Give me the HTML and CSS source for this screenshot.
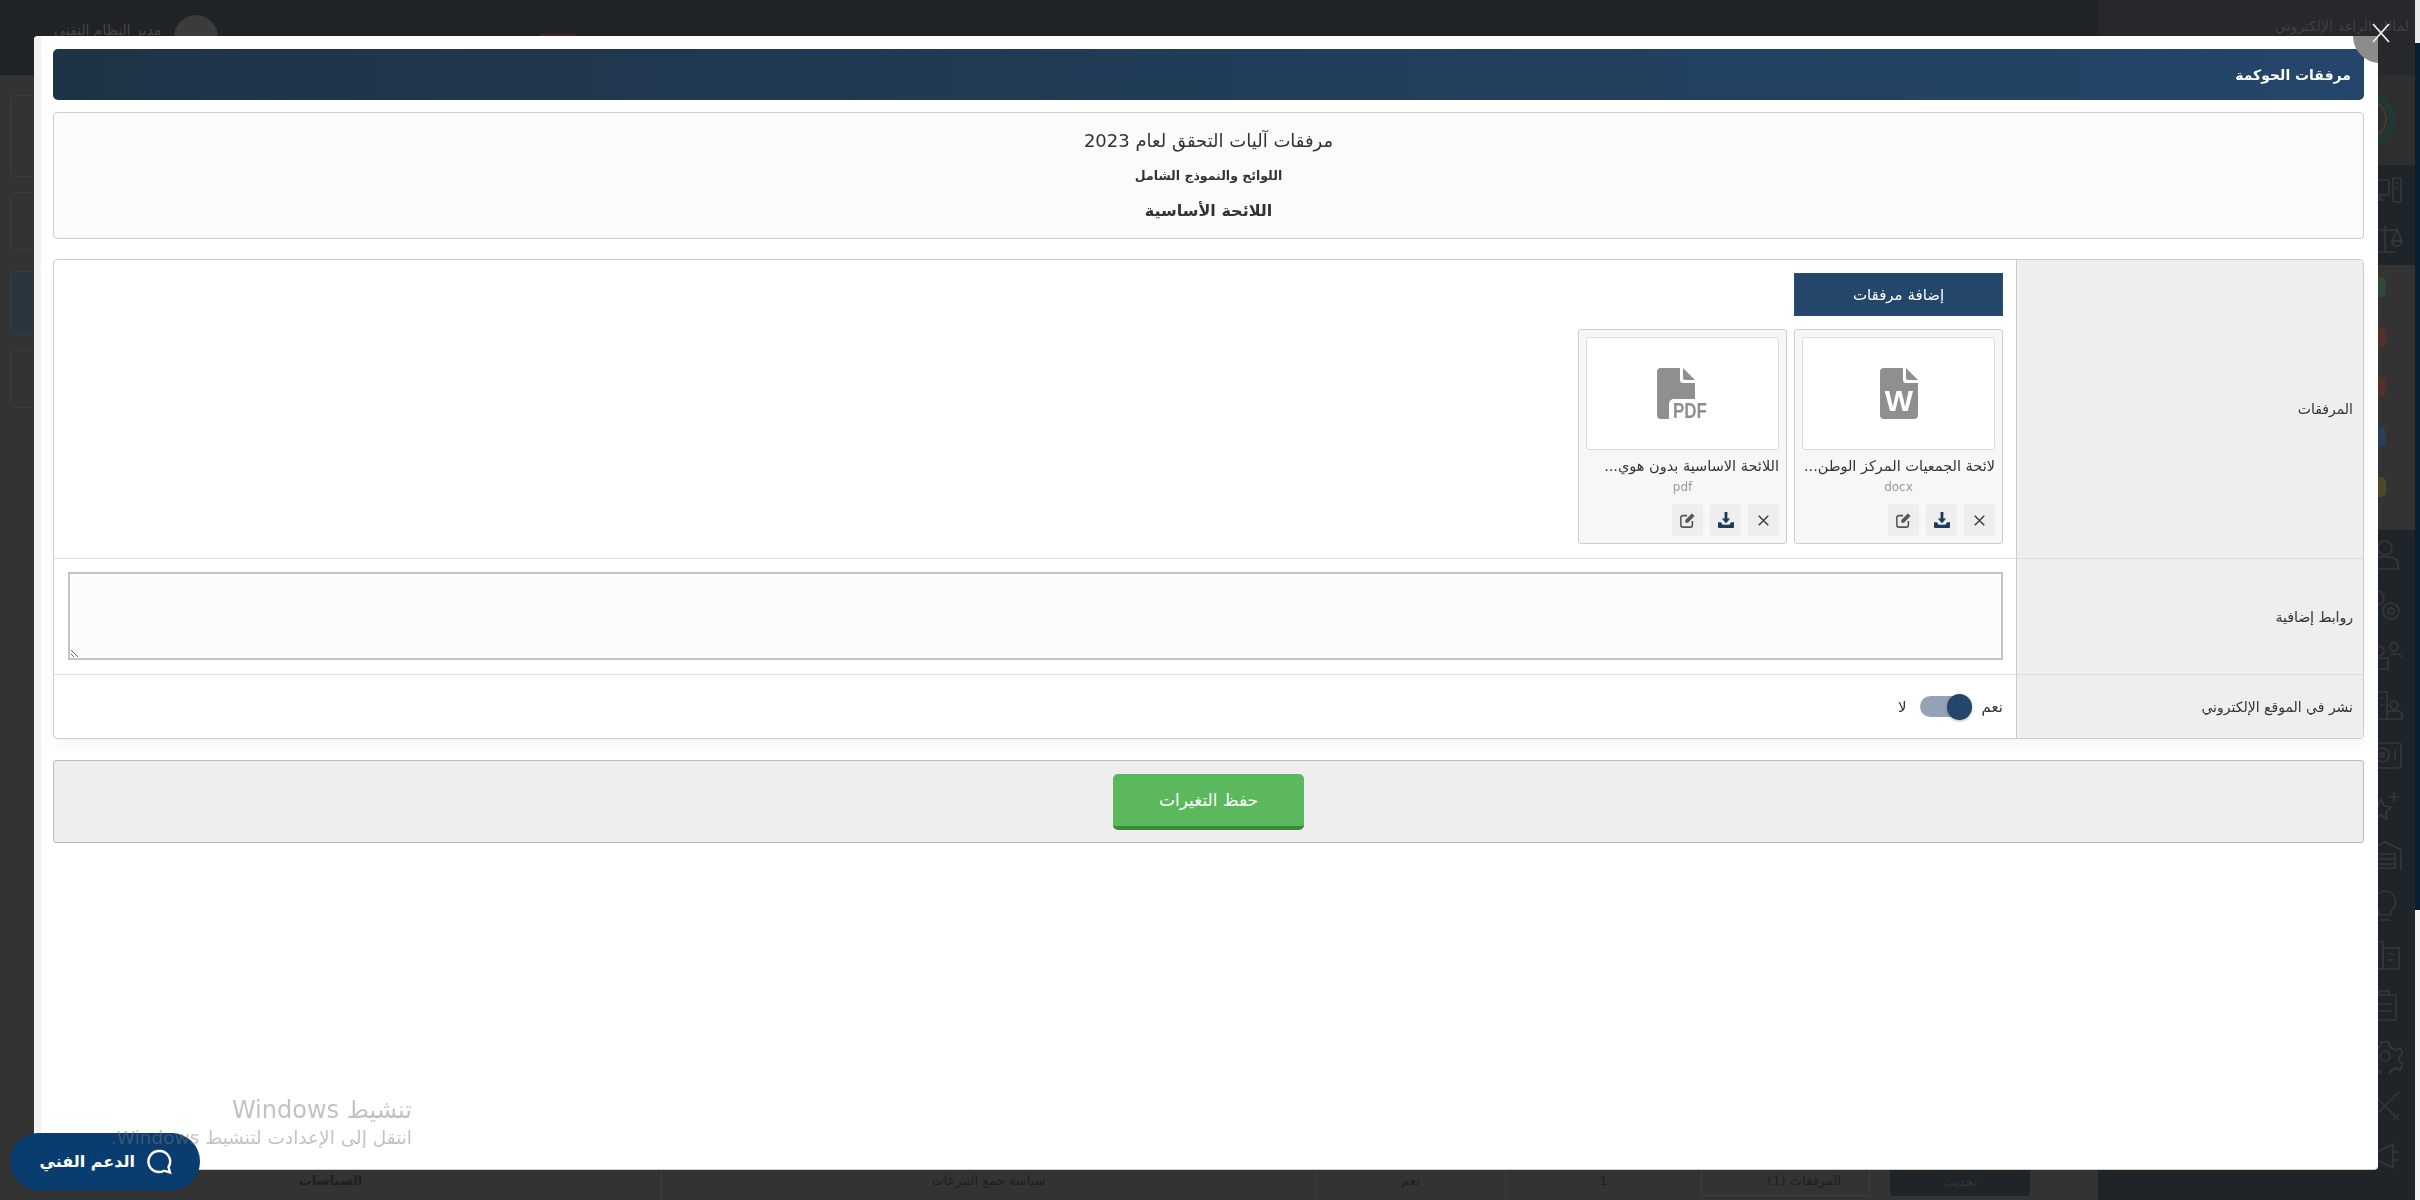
FILE: index.html
```html
<!DOCTYPE html>
<html lang="ar" dir="rtl">
<head>
    <meta charset="UTF-8">
    <meta name="viewport" content="width=device-width, initial-scale=1.0">
    <title>مرفقات الحوكمة</title>
    <link rel="stylesheet" href="styles.css">
</head>
<body>

<!-- the dimmed page behind the dialog -->
<div class="page">
    <div class="edge-strip">
        <div class="edge-top"></div>
        <div class="edge-navy"></div>
        <div class="edge-bottom"></div>
    </div>
    <aside class="sidebar">
        <div class="side-top">لمالك الراغد الإلكتروني</div>
        <div class="side-logo">
            <svg class="logo-arc" width="60" height="60" viewBox="0 0 60 60"><circle cx="30" cy="30" r="25" fill="none" stroke="#1f3a36" stroke-width="7"/><circle cx="30" cy="30" r="19" fill="none" stroke="#413f2c" stroke-width="2"/></svg>
        </div>
        <div class="side-dark">
            <div class="side-item"><svg class="side-icon" viewBox="0 0 36 36"><rect x="2" y="8" width="20" height="15" rx="1"/><path d="M8 28h10M13 23v5"/><rect x="26" y="6" width="8" height="24" rx="1"/><path d="M29 11h2M29 16h2"/></svg></div>
            <div class="side-item"><svg class="side-icon" viewBox="0 0 36 36"><path d="M18 4v26M8 30h20M6 8h24M6 8l-5 11h10zM30 8l-5 11h10zM1 19a5 5 0 0 0 10 0M25 19a5 5 0 0 0 10 0"/></svg></div>
        </div>
        <div class="side-light">
            <span class="dot dot-green"></span>
            <span class="dot dot-red"></span>
            <span class="dot dot-red"></span>
            <span class="dot dot-blue"></span>
            <span class="dot dot-yellow"></span>
        </div>
        <div class="side-list">
            <div class="side-row"><svg class="side-icon" viewBox="0 0 36 36"><circle cx="18" cy="10" r="7"/><path d="M5 31v-4a8 8 0 0 1 8-8h10a8 8 0 0 1 8 8v4z"/></svg></div>
            <div class="side-row"><svg class="side-icon" viewBox="0 0 36 36"><circle cx="10" cy="10" r="7"/><circle cx="24" cy="23" r="8"/><circle cx="24" cy="23" r="3"/></svg></div>
            <div class="side-row"><svg class="side-icon" viewBox="0 0 36 36"><circle cx="12" cy="13" r="5"/><circle cx="27" cy="9" r="4"/><path d="M3 31v-5a6 6 0 0 1 6-6h12v11zM24 16h6a5 5 0 0 1 5 5"/></svg></div>
            <div class="side-row"><svg class="side-icon" viewBox="0 0 36 36"><rect x="2" y="4" width="18" height="27"/><path d="M7 10h3M13 10h3M7 17h3M13 17h3"/><circle cx="27" cy="17" r="4"/><path d="M20 31v-4a4 4 0 0 1 4-4h7a4 4 0 0 1 4 4v4z"/></svg></div>
            <div class="side-row"><svg class="side-icon" viewBox="0 0 36 36"><rect x="2" y="5" width="32" height="25" rx="2"/><circle cx="15" cy="17" r="7"/><circle cx="15" cy="17" r="2"/><path d="M28 12v10"/></svg></div>
            <div class="side-row"><svg class="side-icon" viewBox="0 0 36 36"><path d="M14 11l3 7 7 1-5 5 1 7-6-4-6 4 1-7-5-5 7-1zM27 4v10M22 9h10"/></svg></div>
            <div class="side-row"><svg class="side-icon" viewBox="0 0 36 36"><path d="M2 12L18 4l16 8v20M2 16h26v14H2M2 21h26M2 26h26"/></svg></div>
            <div class="side-row"><svg class="side-icon" viewBox="0 0 36 36"><path d="M18 3a11 11 0 0 0-6 20v4h12v-4a11 11 0 0 0-6-20zM13 32h10"/></svg></div>
            <div class="side-row"><svg class="side-icon" viewBox="0 0 36 36"><rect x="2" y="4" width="14" height="27"/><rect x="16" y="10" width="16" height="21"/><path d="M6 10h6M6 16h6M6 22h6M21 16h6M21 22h6"/></svg></div>
            <div class="side-row"><svg class="side-icon" viewBox="0 0 36 36"><rect x="5" y="7" width="24" height="25" rx="2"/><path d="M12 7V3h10v4M10 16h14M10 23h14"/></svg></div>
            <div class="side-row"><svg class="side-icon" viewBox="0 0 36 36"><path d="M14 4h8l1 5 5 3 5-2 3 6-4 3v4l4 3-3 6-5-2-5 3-1 5h-8l-1-5-5-3-5 2-3-6 4-3v-4l-4-3 3-6 5 2 5-3z"/><circle cx="18" cy="18" r="5"/></svg></div>
            <div class="side-row"><svg class="side-icon" viewBox="0 0 36 36"><path d="M4 4l28 28M32 4L4 32M4 10l6-6M26 32l6-6"/></svg></div>
            <div class="side-row"><svg class="side-icon" viewBox="0 0 36 36"><path d="M4 14v8h6l16 8V6L10 14zM26 14h6M26 22h6"/></svg></div>
        </div>
    </aside>
    <div class="main">
        <div class="topbar">
            <span class="top-badge">369</span>
            <span class="top-link top-alerts">التنبيهات</span>
            <span class="top-link top-site">الموقع الإلكتروني</span>
            <span class="top-avatar"></span>
            <span class="top-user">مدير النظام التقني</span>
        </div>
        <div class="content">
            <div class="back-panel back-tall"></div>
            <div class="back-panel back-short"></div>
            <div class="back-panel back-navy"></div>
            <div class="back-panel back-short"></div>
        </div>
        <div class="table-row">
            <div class="tr-spacer"></div>
            <div class="tr-button">تحديث</div>
            <div class="tr-files">المرفقات (1)</div>
            <div class="tr-cell tr-num">1</div>
            <div class="tr-cell tr-yes">نعم</div>
            <div class="tr-cell tr-name">سياسة جمع التبرعات</div>
            <div class="tr-cell tr-group">السياسات</div>
        </div>
    </div>
</div>

<!-- dialog -->
<div class="modal">
    <div class="modal-corner"></div>
    <div class="modal-inner">
        <div class="modal-header">مرفقات الحوكمة</div>

        <div class="info-panel">
            <div class="info-year">مرفقات آليات التحقق لعام 2023</div>
            <div class="info-group">اللوائح والنموذج الشامل</div>
            <div class="info-name">اللائحة الأساسية</div>
        </div>

        <div class="form-table">
            <div class="form-label row-files">المرفقات</div>
            <div class="form-value row-files">
                <button type="button" class="add-btn">إضافة مرفقات</button>
                <div class="file-list">
                    <div class="file-card">
                        <div class="file-thumb">
                            <svg width="38" height="51" viewBox="0 0 38 51">
                                <path class="file-fill" d="M4 0H23V12a3 3 0 0 0 3 3H38V47a4 4 0 0 1-4 4H4a4 4 0 0 1-4-4V4a4 4 0 0 1 4-4z"/>
                                <path class="file-fill" d="M26 0L38 12H28a2 2 0 0 1-2-2z"/>
                                <text class="file-w" x="19" y="43" text-anchor="middle">W</text>
                            </svg>
                        </div>
                        <div class="file-title">لائحة الجمعيات المركز الوطن...</div>
                        <div class="file-ext">docx</div>
                        <div class="file-actions">
                            <span class="icon-btn"><svg width="11" height="11" viewBox="0 0 14 14"><path class="icon-x" d="M1 1l12 12M13 1L1 13"/></svg></span>
                            <span class="icon-btn"><svg width="16" height="16" viewBox="0 0 17 17"><path class="icon-dl" d="M7 0h3v7h3l-4.500 5L4 7h3zM0 11h3l2 2.500h7L14 11h3v5a1 1 0 0 1-1 1H1a1 1 0 0 1-1-1z"/></svg></span>
                            <span class="icon-btn"><svg width="15" height="15" viewBox="0 0 17 17"><path class="icon-edit" d="M8 3H3a2 2 0 0 0-2 2v9a2 2 0 0 0 2 2h9a2 2 0 0 0 2-2V9"/><path class="icon-pen" d="M13.500 0.500L16.500 3.500 9 11H6V8z"/></svg></span>
                        </div>
                    </div>
                    <div class="file-card">
                        <div class="file-thumb">
                            <svg class="pdf-icon" width="52" height="51" viewBox="0 0 52 51">
                                <path class="file-fill" d="M4 0H23V12a3 3 0 0 0 3 3H38V31H17a5 5 0 0 0-5 5V51H4a4 4 0 0 1-4-4V4a4 4 0 0 1 4-4z"/>
                                <path class="file-fill" d="M26 0L38 12H28a2 2 0 0 1-2-2z"/>
                                <text class="file-pdf" transform="translate(16 50) scale(1 1.25)" direction="ltr">PDF</text>
                            </svg>
                        </div>
                        <div class="file-title">اللائحة الاساسية بدون هوي...</div>
                        <div class="file-ext">pdf</div>
                        <div class="file-actions">
                            <span class="icon-btn"><svg width="11" height="11" viewBox="0 0 14 14"><path class="icon-x" d="M1 1l12 12M13 1L1 13"/></svg></span>
                            <span class="icon-btn"><svg width="16" height="16" viewBox="0 0 17 17"><path class="icon-dl" d="M7 0h3v7h3l-4.500 5L4 7h3zM0 11h3l2 2.500h7L14 11h3v5a1 1 0 0 1-1 1H1a1 1 0 0 1-1-1z"/></svg></span>
                            <span class="icon-btn"><svg width="15" height="15" viewBox="0 0 17 17"><path class="icon-edit" d="M8 3H3a2 2 0 0 0-2 2v9a2 2 0 0 0 2 2h9a2 2 0 0 0 2-2V9"/><path class="icon-pen" d="M13.500 0.500L16.500 3.500 9 11H6V8z"/></svg></span>
                        </div>
                    </div>
                </div>
            </div>

            <div class="form-label row-links">روابط إضافية</div>
            <div class="form-value row-links">
                <textarea class="links-input"></textarea>
            </div>

            <div class="form-label row-publish">نشر في الموقع الإلكتروني</div>
            <div class="form-value row-publish publish-cell">
                <span>نعم</span>
                <span class="switch"><span class="switch-knob"></span></span>
                <span>لا</span>
            </div>
        </div>

        <div class="save-panel">
            <button type="button" class="save-btn">حفظ التغيرات</button>
        </div>
    </div>
    <div class="modal-scroll"></div>
</div>

<svg class="modal-close" width="20" height="20" viewBox="0 0 20 20"><path d="M2 1l16 18M18 1L2 19"/></svg>

<div class="support">
    <svg width="26" height="26" viewBox="0 0 26 26"><path d="M12 2a10.500 10.500 0 1 0 5 19.700l6 1.800-1.500-5.500A10.500 10.500 0 0 0 12 2z"/></svg>
    <span>الدعم الفني</span>
</div>

<div class="watermark">
    <div class="wm-title">تنشيط Windows</div>
    <div class="wm-sub">انتقل إلى الإعدادت لتنشيط Windows.</div>
</div>

</body>
</html>
```

FILE: styles.css
```css
/* Global styles */
html, body {
    margin: 0;
    height: 1200px;
    overflow: hidden;
}

body {
    font-family: 'DejaVu Sans', 'Noto Sans', sans-serif;
    font-size: 13px;
    color: #333;
    background-color: #333;
}

/* Dimmed page behind the dialog */
.page {
    display: flex;
    height: 1200px;
}

.edge-strip {
    width: 5px;
    display: flex;
    flex-direction: column;
}

.edge-top {
    height: 43px;
    background-color: #e9e9e9;
}

.edge-navy {
    height: 867px;
    background-color: #0a1e33;
}

.edge-bottom {
    flex: 1;
    background-color: #f4f4f4;
}

.sidebar {
    width: 317px;
    background-color: #1f2428;
    display: flex;
    flex-direction: column;
}

.side-top {
    height: 75px;
    box-sizing: border-box;
    padding: 18px 6px 0 0;
    background-color: #26282b;
    color: #3e4144;
    font-size: 14px;
}

.side-logo {
    height: 90px;
    background-color: #2e2e2e;
    padding: 14px 18px 0 0;
    box-sizing: border-box;
}

.logo-arc {
    display: block;
}

.side-dark {
    height: 100px;
}

.side-item {
    height: 50px;
    padding-right: 12px;
    display: flex;
    align-items: center;
}

.side-icon {
    width: 36px;
    height: 36px;
    fill: none;
    stroke: #34393d;
    stroke-width: 1.6;
}

.side-light {
    height: 265px;
    background-color: #333;
    padding-right: 29px;
    box-sizing: border-box;
    padding-top: 12px;
    display: flex;
    flex-direction: column;
    gap: 30px;
}

.dot {
    display: block;
    width: 18px;
    height: 20px;
    border-radius: 5px;
}

.dot-green { background-color: #2c4a35; }
.dot-red { background-color: #54302a; }
.dot-blue { background-color: #2c3e55; }
.dot-yellow { background-color: #4d4a2a; }

.side-list {
    padding-top: 1px;
}

.side-row {
    height: 50px;
    padding-right: 12px;
    display: flex;
    align-items: center;
}

.main {
    flex: 1;
    display: flex;
    flex-direction: column;
    min-width: 0;
}

.topbar {
    height: 75px;
    background-color: #1f2226;
    display: flex;
    align-items: flex-start;
    justify-content: flex-end;
    padding: 22px 30px 0 54px;
    box-sizing: border-box;
    color: #44474a;
    font-size: 14px;
}

.top-badge {
    background-color: #4a2320;
    color: #5a4a48;
    padding: 4px 6px;
    margin-top: 12px;
    font-size: 12px;
}

.top-link {
    margin-top: 12px;
}

.top-alerts {
    margin-right: 12px;
}

.top-site {
    margin-right: 116px;
}

.top-avatar {
    width: 44px;
    height: 44px;
    border-radius: 50%;
    background-color: #3b3b3b;
    margin: -7px 46px 0 12px;
}

.content {
    flex: 1;
    padding: 20px 10px 0;
    display: flex;
    flex-direction: column;
}

.back-panel {
    border: 1px solid #3c3c3c;
    border-radius: 4px;
}

.back-tall {
    height: 80px;
}

.back-short {
    height: 56px;
    margin-top: 15px;
}

.back-navy {
    height: 62px;
    margin-top: 21px;
    background-color: #2a3540;
}

.table-row {
    height: 30px;
    display: flex;
    color: #1f1f1f;
    font-size: 13px;
}

.tr-spacer {
    width: 68px;
}

.tr-button {
    width: 140px;
    height: 26px;
    background-color: #1f2428;
    border-radius: 0 0 4px 4px;
    text-align: center;
    color: #33363a;
    line-height: 24px;
}

.tr-files {
    width: 169px;
    margin-right: 20px;
    height: 26px;
    box-sizing: border-box;
    border: 1px solid #3e3e3e;
    border-top: none;
    padding-right: 28px;
    line-height: 22px;
}

.tr-cell {
    border-left: 1px solid #3c3c3c;
    box-sizing: border-box;
    text-align: center;
    line-height: 22px;
}

.tr-num { width: 196px; }
.tr-yes { width: 190px; }
.tr-name { width: 654px; }

.tr-group {
    flex: 1;
    border-left: none;
    font-weight: bold;
}

/* Dialog */
.modal {
    position: fixed;
    left: 34px;
    top: 36px;
    width: 2344px;
    height: 1134px;
    display: flex;
    background-color: #fff;
    border-bottom: 1px solid #ccc;
    border-radius: 4px;
    box-sizing: border-box;
    overflow: hidden;
}

.modal-corner {
    position: absolute;
    right: -29px;
    top: -27px;
    width: 54px;
    height: 54px;
    border-radius: 50%;
    background-color: #8c8c8c;
    z-index: 2;
}

.modal-close {
    position: fixed;
    left: 2371px;
    top: 23px;
    fill: none;
    stroke: #eee;
    stroke-width: 1.8;
}

.modal-inner {
    flex: 1;
    min-width: 0;
    padding: 13px 14px 0 12px;
}

.modal-scroll {
    width: 7px;
    background-color: #f2f2f2;
}

.modal-header {
    height: 51px;
    box-sizing: border-box;
    padding: 0 13px;
    display: flex;
    align-items: center;
    border-radius: 5px;
    color: #fff;
    font-size: 14px;
    font-weight: bold;
    background: linear-gradient(to left, #24466a, #1f3346);
}

/* Top info panel */
.info-panel {
    height: 127px;
    margin-top: 12px;
    box-sizing: border-box;
    border: 1px solid #ccc;
    border-radius: 4px;
    background-color: #fbfbfb;
    text-align: center;
    padding-top: 14px;
}

.info-year {
    font-size: 18px;
    line-height: 28px;
}

.info-group {
    font-size: 12.5px;
    font-weight: bold;
    line-height: 20px;
    margin-top: 11px;
}

.info-name {
    font-size: 16px;
    font-weight: bold;
    line-height: 24px;
    margin-top: 13px;
}

/* Form table */
.form-table {
    margin-top: 20px;
    display: grid;
    grid-template-columns: 347px 1fr;
    grid-template-rows: 298px 116px 64px;
    border: 1px solid #ccc;
    border-radius: 4px;
    box-shadow: 0 6px 12px rgba(0, 0, 0, 0.04);
    overflow: hidden;
}

.form-label {
    display: flex;
    align-items: center;
    padding-right: 10px;
    background-color: #eee;
    border-left: 1px solid #ccc;
    font-size: 14px;
}

.form-value {
    padding: 13px 13px 0 14px;
    min-width: 0;
}

.row-links,
.row-publish {
    border-top: 1px solid #ddd;
}

.add-btn {
    display: block;
    width: 209px;
    height: 43px;
    border: 1px solid #1f4f86;
    background-color: #24466a;
    color: #fff;
    font-family: inherit;
    font-size: 15px;
    padding: 0;
}

.file-list {
    display: flex;
    gap: 7px;
    margin-top: 13px;
}

.file-card {
    width: 209px;
    height: 215px;
    box-sizing: border-box;
    padding: 7px;
    border: 1px solid #ccc;
    border-radius: 3px;
    background-color: #f7f7f7;
}

.file-thumb {
    height: 113px;
    box-sizing: border-box;
    border: 1px solid #ddd;
    border-radius: 3px;
    background-color: #fff;
    display: flex;
    align-items: center;
    justify-content: center;
}

.file-fill {
    fill: #8f8f8f;
}

.file-w {
    fill: #fff;
    font-family: 'Liberation Sans', sans-serif;
    font-size: 30px;
    font-weight: bold;
}

.pdf-icon {
    overflow: visible;
}

.file-pdf {
    fill: #8f8f8f;
    font-family: 'Liberation Sans', sans-serif;
    font-size: 17px;
    font-weight: bold;
}

.file-title {
    margin-top: 5px;
    font-size: 14.5px;
    line-height: 22px;
    white-space: nowrap;
}

.file-ext {
    text-align: center;
    color: #999;
    font-size: 12px;
    line-height: 18px;
    margin-top: 1px;
}

.file-actions {
    display: flex;
    gap: 7px;
    margin-top: 8px;
}

.icon-btn {
    width: 31px;
    height: 32px;
    border-radius: 3px;
    background-color: #eee;
    display: flex;
    align-items: center;
    justify-content: center;
}

.icon-x {
    fill: none;
    stroke: #444;
    stroke-width: 2;
}

.icon-dl {
    fill: #1f3a5a;
}

.icon-edit {
    fill: none;
    stroke: #555;
    stroke-width: 1.8;
}

.icon-pen {
    fill: #555;
}

.links-input {
    display: block;
    width: 100%;
    height: 88px;
    box-sizing: border-box;
    border: 2px solid #c4c4c4;
    background-color: #fcfcfc;
}

.publish-cell {
    display: flex;
    align-items: center;
    padding-top: 0;
    gap: 10px;
    font-size: 15px;
}

.switch {
    position: relative;
    display: block;
    width: 52px;
    height: 21px;
    border-radius: 11px;
    background-color: #93a3b5;
    margin-left: 3px;
}

.switch-knob {
    position: absolute;
    right: 0;
    top: -2px;
    width: 25px;
    height: 26px;
    border-radius: 50%;
    background-color: #24466a;
    box-shadow: 0 1px 3px rgba(0, 0, 0, 0.3);
}

/* Save bar */
.save-panel {
    margin-top: 21px;
    height: 83px;
    box-sizing: border-box;
    display: flex;
    align-items: center;
    justify-content: center;
    border: 1px solid #bbb;
    border-radius: 3px;
    background-color: #eee;
}

.save-btn {
    width: 191px;
    height: 56px;
    border: none;
    border-bottom: 4px solid #3a8a3a;
    border-radius: 5px;
    background-color: #5cb85c;
    color: #fff;
    font-family: inherit;
    font-size: 17px;
}

/* Watermark and support button */
.watermark {
    position: fixed;
    left: 100px;
    top: 1094px;
    width: 312px;
    color: rgba(120, 120, 120, 0.45);
}

.wm-title {
    font-size: 24px;
    line-height: 32px;
}

.wm-sub {
    font-size: 18.5px;
    line-height: 24px;
    white-space: nowrap;
}

.support {
    position: fixed;
    left: 10px;
    top: 1133px;
    width: 190px;
    height: 57px;
    box-sizing: border-box;
    padding-right: 27px;
    border-radius: 29px;
    background-color: #0a3d6f;
    color: #fff;
    font-size: 16px;
    font-weight: bold;
    display: flex;
    align-items: center;
    gap: 12px;
}

.support svg {
    fill: none;
    stroke: #fff;
    stroke-width: 2.4;
}
```
